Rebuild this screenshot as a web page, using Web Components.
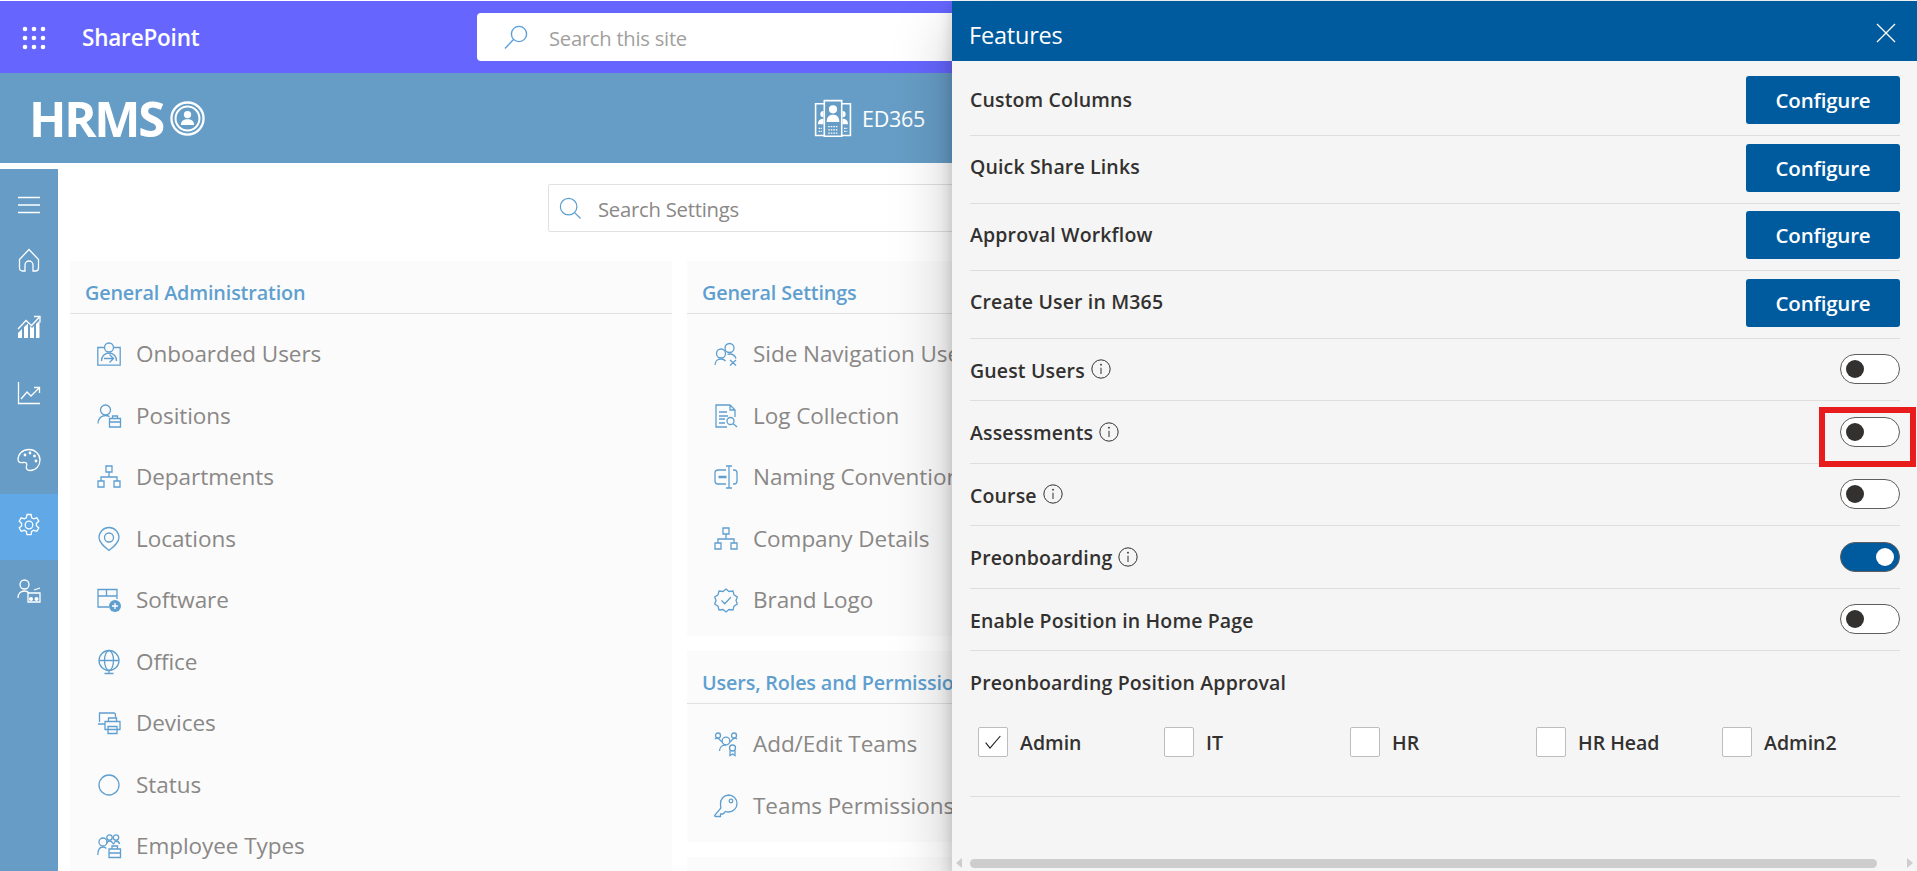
<!DOCTYPE html>
<html lang="en">
<head>
<meta charset="utf-8">
<title>HRMS Settings</title>
<style>
  html, body { margin: 0; height: 100%; overflow: hidden; background: #fff; }
  body { font-family: "Open Sans", "Liberation Sans", sans-serif; }
</style>
</head>
<body>
<hrms-app>
  <top-bar slot="top">SharePoint</top-bar>
  <brand-bar slot="brand"></brand-bar>
  <side-nav slot="nav"></side-nav>
  <settings-main slot="main">
    <settings-card slot="col1" heading="General Administration">
      <settings-item icon="onboard">Onboarded Users</settings-item>
      <settings-item icon="positions">Positions</settings-item>
      <settings-item icon="org">Departments</settings-item>
      <settings-item icon="pin">Locations</settings-item>
      <settings-item icon="software">Software</settings-item>
      <settings-item icon="globe">Office</settings-item>
      <settings-item icon="devices">Devices</settings-item>
      <settings-item icon="status">Status</settings-item>
      <settings-item icon="emptypes">Employee Types</settings-item>
    </settings-card>
    <settings-card slot="col2" heading="General Settings">
      <settings-item icon="sidenav">Side Navigation Users</settings-item>
      <settings-item icon="log">Log Collection</settings-item>
      <settings-item icon="rename">Naming Conventions</settings-item>
      <settings-item icon="org">Company Details</settings-item>
      <settings-item icon="badge">Brand Logo</settings-item>
    </settings-card>
    <settings-card slot="col2" heading="Users, Roles and Permissions">
      <settings-item icon="teams">Add/Edit Teams</settings-item>
      <settings-item icon="key">Teams Permissions</settings-item>
    </settings-card>
    <settings-card slot="col2"></settings-card>
  </settings-main>
  <features-panel slot="panel" heading="Features">
    <config-row>Custom Columns</config-row>
    <config-row>Quick Share Links</config-row>
    <config-row>Approval Workflow</config-row>
    <config-row>Create User in M365</config-row>
    <toggle-row info>Guest Users</toggle-row>
    <toggle-row info highlight>Assessments</toggle-row>
    <toggle-row info>Course</toggle-row>
    <toggle-row info on>Preonboarding</toggle-row>
    <toggle-row>Enable Position in Home Page</toggle-row>
    <approval-group heading="Preonboarding Position Approval">
      <check-item checked>Admin</check-item>
      <check-item>IT</check-item>
      <check-item>HR</check-item>
      <check-item>HR Head</check-item>
      <check-item>Admin2</check-item>
    </approval-group>
  </features-panel>
</hrms-app>

<script>
/**
 * Icon bodies, all drawn on a 24x24 grid.
 */
const ICONS = {
  waffle: [4, 13, 22].map(y => [3, 12, 21].map(x => `<circle cx="${x}" cy="${y}" r="2.3" fill="currentColor" stroke="none"/>`).join('')).join(''),
  sitesearch: '<circle cx="15" cy="9" r="7.6"/><path d="M9.5 14.5L1 23.5"/>',
  search: '<circle cx="10.5" cy="10.5" r="9"/><path d="M17 17l6.5 6.5"/>',
  close: '<path d="M3 3l18 18M21 3L3 21"/>',
  menu: '<path d="M1 4.500h22M1 12h22M1 19.500h22"/>',
  home: '<path d="M2.500 11.500L12 1.500l9.500 10v8.500a3 3 0 0 1-3 3h-2.500v-6a4 4 0 0 0-8 0v6H5.500a3 3 0 0 1-3-3z"/>',
  bars: '<g fill="currentColor" stroke="none"><path d="M1 23v-5l4-4v9zM7 23V12l4-3.500V23zM13 23V11l2 2 2-2v12zM19 23V9l3.500-3.500V23z"/></g><path d="M1 14L9 5.500l5.500 5L22 2.500M17 1.500h6v6"/>',
  line: '<path d="M1.500 1v21.500H23"/><path d="M4 18l6-7 4 4 8-8M17 6.500h5.500V12"/>',
  palette: '<path d="M12 1.500C5.500 1.500 1 6 1 11.500c0 3 3 3.500 5 3 3-.7 4.500 1 3.500 3.500-.8 2.500.5 4.500 3.500 4.500 6 0 10-5 10-10.500S18.500 1.500 12 1.500z"/><g fill="currentColor" stroke="none"><circle cx="8" cy="7" r="1.400"/><circle cx="13" cy="5" r="1.400"/><circle cx="17.500" cy="8" r="1.400"/><circle cx="19" cy="13" r="1.400"/></g>',
  gear: '<circle cx="12" cy="12" r="3.800"/><path d="M10 1.500h4l.7 3.200 2 1.100 3.100-1 2 3.400-2.400 2.200v2.300l2.400 2.200-2 3.400-3.100-1-2 1.100-.7 3.200h-4l-.7-3.200-2-1.100-3.100 1-2-3.400 2.400-2.200v-2.300L2.200 8.200l2-3.400 3.100 1 2-1.100z"/>',
  useradmin: '<circle cx="7.500" cy="5.500" r="4.500"/><path d="M1 19c0-4.500 3-7 6.500-7 2 0 3.500.7 4.500 2"/><path d="M11 14h12v9H11z"/><g fill="currentColor" stroke="none"><circle cx="14" cy="20" r="2"/><circle cx="19.500" cy="20" r="2"/></g><path d="M17 11l6-2"/>',
  ed365: '<g stroke-width="1"><path d="M6.500 3H1v20h5.500M17.500 3H23v20h-5.500"/><path d="M6.500 1h11v22.500h-11z"/></g><circle cx="12" cy="6.500" r="2.600" fill="currentColor" stroke="none"/><path d="M8 14.500c0-3.500 2-4.500 4-4.500s4 1 4 4.500z" fill="currentColor" stroke="none"/><path d="M9 17.500h6M9 19.500h6M9 21.500h6" stroke-width=".8" stroke-dasharray="1 .6"/><g fill="currentColor" stroke="none"><path d="M6 7.500a2 2 0 0 0 0 4zM6 12.500c-2 0-3.500 1-3.500 3.500H6zM18 7.500a2 2 0 0 1 0 4zM18 12.500c2 0 3.500 1 3.500 3.500H18z"/></g><path d="M3 18.500h2M3 20.500h2M19 18.500h2M19 20.500h2" stroke-width=".8" stroke-dasharray="1 .5"/>',
  hrmslogo: '<circle cx="12" cy="12" r="11" stroke-width="1.600"/><circle cx="12" cy="12" r="8.200" stroke-width="1.400"/><circle cx="12" cy="9.300" r="2.500" fill="currentColor" stroke="none"/><path d="M7.500 16.500c0-3 2-4 4.500-4s4.500 1 4.500 4z" fill="currentColor" stroke="none"/>',
  onboard: '<path d="M7 5.500H.8v17.700h22.400V5.500H17"/><circle cx="12" cy="5.500" r="4.500"/><path d="M4.500 19c0-4.500 3-8 7.500-8s7.500 3.500 7.500 8M7 16.500h9M12.500 12.500l4 4-4 4"/>',
  positions: '<circle cx="8.500" cy="6" r="5"/><path d="M1 19.500c0-4.500 3-8 7.500-8 1.500 0 3 .4 4 1.100"/><path d="M12.500 14.500h11v8.500h-11zM15.500 14.500v-2.500h5v2.500M12.500 18h11"/>',
  org: '<path d="M9 1h6v6H9zM1 16h6v6H1zM17 16h6v6h-6zM12 7v5M4 16v-4h16v4"/>',
  pin: '<path d="M12 23.500C7 19.500 2 15.500 2 10.500a10 10 0 0 1 20 0c0 5-5 9-10 13z"/><circle cx="12" cy="10.500" r="4.500"/>',
  software: '<path d="M12 19H1V1.500h19V11M1 8h19M9.500 1.500V8"/><circle cx="18" cy="18" r="6" fill="currentColor" stroke="none"/><path d="M18 15v6M15 18h6" stroke="#fff"/>',
  globe: '<circle cx="12" cy="10.500" r="10"/><ellipse cx="12" cy="10.500" rx="4.500" ry="10"/><path d="M2 10.500h20M12 20.500v3M7.500 23.500h9"/>',
  devices: '<path d="M2.500 11V2h14c1 0 2 1 2 2v2.500M1 13h7"/><path d="M8 10.500h15v8h-15z" stroke-linejoin="round"/><path d="M11.500 10.500V7h8v3.500M11 15.500h9v7h-9z"/>',
  status: '<circle cx="12" cy="12" r="10"/>',
  emptypes: '<circle cx="6" cy="8" r="4"/><circle cx="12.500" cy="3.500" r="2.700"/><circle cx="19" cy="3.500" r="2.700"/><path d="M.8 21c0-5 2-8 5.200-8 1.200 0 2.500.5 3.300 1.500M9.500 9.500c.5-1.500 1.500-2.500 3-2.500s2.800 1 3.500 2.500 2-2.500 3-2.500 3 1 3.700 3M12 15h11.500v8.500H12zM15 15v-3h5.500v3M12 19h11.500"/>',
  sidenav: '<circle cx="15.500" cy="6" r="4.500"/><circle cx="7" cy="11.500" r="4.500"/><path d="M1 23c0-3.500 2.500-6 6-6 2 0 3.500.7 4.500 2M13.500 12.500c.6-.3 1.300-.5 2-.5 3 0 5.500 1.500 6.500 4.500M16 18l6 5.500M22 18l-6 5.500"/>',
  log: '<path d="M13 23H2V1h14l5 5v7M16 1v5h5M5 8h8M5 12h9M5 15h6M5 19h6"/><circle cx="16.500" cy="17" r="3.500"/><path d="M19 19.500l4 3.500"/>',
  rename: '<path d="M12 5H4a3 3 0 0 0-3 3v8a3 3 0 0 0 3 3h8M19 5h1a3 3 0 0 1 3 3v8a3 3 0 0 1-3 3h-1M12 1h6M12 23h6M15 1v22"/><path d="M4.500 12h8" stroke-width="2.500"/>',
  badge: '<path d="M12 1l3 2.500 4-.5 1 3.800 3.300 2.200L22 12.500l1.300 3.500-3.300 2.200-1 3.800-4-.5-3 2.500-3-2.500-4 .5-1-3.800L.7 16 2 12.500.7 9l3.300-2.200L5 3l4 .5z"/><path d="M7.500 12.500l3.300 3.300 6-6.500"/>',
  teams: '<circle cx="12" cy="9" r="3.800"/><circle cx="4" cy="3.500" r="2.500"/><circle cx="20" cy="3.500" r="2.500"/><path d="M1 7c1-1 3-1 4 0l3 3M23 7c-1-1-3-1-4 0l-3 3M5.500 19c0-3.500 2.500-6 6.500-6"/><circle cx="18.500" cy="16" r="3"/><path d="M16 18.500v5l2.500-1.500 2.500 1.500v-5"/>',
  key: '<path d="M14.500 1a8.500 8.500 0 0 1 0 17c-1 0-2-.2-3-.5L9 20H6.500v2.500H1.500c-1 0-1-1-.5-1.500l6-7c-.4-1-.5-2-.5-3.500A8.500 8.500 0 0 1 14.500 1z"/><circle cx="17" cy="7" r="1.800"/>',
  info: '<circle cx="12" cy="12" r="11"/><path d="M12 10.500v7.500"/><circle cx="12" cy="6.800" r="1.100" fill="currentColor" stroke="none"/>',
  check: '<path d="M1 13l6.500 8L23 3"/>'
}

/**
 * Inline icon, takes its colour from the surrounding text.
 */
customElements.define('app-icon',
  class extends HTMLElement {
    constructor () {
      super()
      const size = this.getAttribute('size') || 24
      const w = this.getAttribute('weight') || 1.3
      this.attachShadow({ mode: 'open' }).innerHTML = `
        <style>
          :host { display: inline-flex; flex: none; width: ${size}px; height: ${size}px; }
          svg { width: 100%; height: 100%; display: block; overflow: visible; }
        </style>
        <svg viewBox="0 0 24 24" fill="none" stroke="currentColor" stroke-width="${w}">${ICONS[this.getAttribute('name')] || ''}</svg>`
    }
  }
)

const appTemplate = document.createElement('template')
appTemplate.innerHTML = `
  <style>
    :host { display: flex; flex-direction: column; height: 871px; padding-top: 1px; box-sizing: border-box; position: relative; overflow: hidden; }
    #body { display: flex; flex: 1; min-height: 0; margin-top: 6px; }
  </style>
  <slot name="top"></slot>
  <slot name="brand"></slot>
  <div id="body">
    <slot name="nav"></slot>
    <slot name="main"></slot>
  </div>
  <slot name="panel"></slot>
`
customElements.define('hrms-app',
  class extends HTMLElement {
    constructor () {
      super()
      this.attachShadow({ mode: 'open' }).appendChild(appTemplate.content.cloneNode(true))
    }
  }
)

const topBarTemplate = document.createElement('template')
topBarTemplate.innerHTML = `
  <style>
    :host { display: flex; align-items: center; height: 72px; flex: none; background: #6666ff; color: #fff; }
    app-icon { margin-left: 22px; }
    #name { margin-left: 36px; width: 395px; font-size: 22.500px; font-weight: 600; letter-spacing: -.2px; }
    #box { display: flex; align-items: center; width: 640px; height: 48px; background: #fff; border-radius: 4px; color: #5a9fdc; }
    #box app-icon { margin-left: 27px; }
    #box span { margin-left: 21px; margin-top: 2px; font-size: 20.200px; color: #a19f9d; letter-spacing: -.25px; }
  </style>
  <app-icon name="waffle" size="24"></app-icon>
  <div id="name"><slot></slot></div>
  <div id="box"><app-icon name="sitesearch" size="24" weight="1.400"></app-icon><span>Search this site</span></div>
`
customElements.define('top-bar',
  class extends HTMLElement {
    constructor () {
      super()
      this.attachShadow({ mode: 'open' }).appendChild(topBarTemplate.content.cloneNode(true))
    }
  }
)

const brandTemplate = document.createElement('template')
brandTemplate.innerHTML = `
  <style>
    :host { display: flex; align-items: center; height: 90px; flex: none; background: #669dc6; color: #fff; }
    #logo { display: flex; align-items: center; margin-left: 29px; width: 785px; }
    #logo b { font-size: 49px; font-weight: 700; letter-spacing: -2.300px; line-height: 1; }
    #logo app-icon { margin-left: 7px; margin-top: 1px; }
    #site { display: flex; align-items: center; gap: 10px; font-size: 21.500px; letter-spacing: -.3px; }
  </style>
  <div id="logo"><b>HRMS</b><app-icon name="hrmslogo" size="35"></app-icon></div>
  <div id="site"><app-icon name="ed365" size="38" weight=".8"></app-icon><span>ED365</span></div>
`
customElements.define('brand-bar',
  class extends HTMLElement {
    constructor () {
      super()
      this.attachShadow({ mode: 'open' }).appendChild(brandTemplate.content.cloneNode(true))
    }
  }
)

const navTemplate = document.createElement('template')
navTemplate.innerHTML = `
  <style>
    :host { display: flex; flex-direction: column; width: 58px; flex: none; background: #669cc6; color: #fff; }
    div { display: flex; align-items: center; justify-content: center; height: 66px; box-sizing: border-box; }
    div.on { background: #60a8e6; }
    #menu { height: 60.500px; padding-top: 12px; }
    #last { height: 60px; padding-top: 2px; }
  </style>
  <div id="menu"><app-icon name="menu" size="24"></app-icon></div>
  <div style="padding-bottom:6px"><app-icon name="home" size="24"></app-icon></div>
  <div style="padding-bottom:3px"><app-icon name="bars" size="24"></app-icon></div>
  <div style="padding-bottom:3px"><app-icon name="line" size="24"></app-icon></div>
  <div style="padding-bottom:2px"><app-icon name="palette" size="24"></app-icon></div>
  <div class="on" style="padding-bottom:3px"><app-icon name="gear" size="24"></app-icon></div>
  <div id="last"><app-icon name="useradmin" size="24"></app-icon></div>
`
customElements.define('side-nav',
  class extends HTMLElement {
    constructor () {
      super()
      this.attachShadow({ mode: 'open' }).appendChild(navTemplate.content.cloneNode(true))
    }
  }
)

const mainTemplate = document.createElement('template')
mainTemplate.innerHTML = `
  <style>
    :host { display: block; flex: 1; min-width: 0; padding-left: 12px; overflow: hidden; }
    #search { display: flex; align-items: center; width: 880px; height: 48px; box-sizing: border-box; margin: 15px 0 29px 478px; border: 1px solid #e1e1e1; border-radius: 2px; background: #fff; color: #5a9fd0; }
    #search app-icon { margin-left: 10px; }
    #search span { margin-left: 17px; margin-top: 2px; font-size: 20.300px; color: #8a8886; letter-spacing: -.25px; }
    #cols { display: grid; grid-template-columns: 602px 602px; gap: 15px; }
    .col { display: flex; flex-direction: column; gap: 15px; }
  </style>
  <div id="search"><app-icon name="search" size="22" weight="1.300"></app-icon><span>Search Settings</span></div>
  <div id="cols">
    <div class="col"><slot name="col1"></slot></div>
    <div class="col"><slot name="col2"></slot></div>
  </div>
`
customElements.define('settings-main',
  class extends HTMLElement {
    constructor () {
      super()
      this.attachShadow({ mode: 'open' }).appendChild(mainTemplate.content.cloneNode(true))
    }
  }
)

const cardTemplate = document.createElement('template')
cardTemplate.innerHTML = `
  <style>
    :host { display: block; background: #fbfbfb; }
    h2 { display: flex; align-items: center; height: 42px; margin: 0; padding: 10px 15px 0; border-bottom: 1px solid #e1e1e1; font-size: 19.800px; font-weight: 600; color: #5f9fcf; white-space: nowrap; letter-spacing: -.15px; }
    #list { padding: 9.500px 0 5px; }
  </style>
  <h2></h2>
  <div id="list"><slot></slot></div>
`
customElements.define('settings-card',
  class extends HTMLElement {
    constructor () {
      super()
      this.attachShadow({ mode: 'open' }).appendChild(cardTemplate.content.cloneNode(true))
      this.shadowRoot.querySelector('h2').textContent = this.getAttribute('heading') || ''
    }
  }
)

const itemTemplate = document.createElement('template')
itemTemplate.innerHTML = `
  <style>
    :host { display: flex; align-items: center; height: 61.500px; padding-left: 27px; color: #5f9fcf; }
    span { margin-left: 15px; margin-top: -1.500px; font-size: 22.500px; color: #8a8886; white-space: nowrap; letter-spacing: -.05px; }
  </style>
  <app-icon size="24"></app-icon>
  <span><slot></slot></span>
`
customElements.define('settings-item',
  class extends HTMLElement {
    constructor () {
      super()
      const root = this.attachShadow({ mode: 'open' })
      const content = itemTemplate.content.cloneNode(true)
      content.querySelector('app-icon').setAttribute('name', this.getAttribute('icon'))
      root.appendChild(content)
    }
  }
)

const panelTemplate = document.createElement('template')
panelTemplate.innerHTML = `
  <style>
    :host { position: absolute; top: 1px; right: 0; bottom: 0; width: 965px; display: flex; flex-direction: column; background: #f5f5f5; box-shadow: 0 25.600px 57.600px 0 rgba(0,0,0,.22), 0 4.800px 14.400px 0 rgba(0,0,0,.18); }
    header { display: flex; align-items: center; justify-content: space-between; height: 60px; flex: none; padding: 0 19px 0 17px; box-sizing: border-box; background: #005a9e; color: #fff; }
    header span { font-size: 23.500px; letter-spacing: -.2px; margin-top: 8px; }
    header app-icon { margin-top: 3px; }
    #body { flex: 1; min-height: 0; padding: 7.500px 17px 0 18px; }
    #scroll { display: flex; align-items: center; height: 16px; flex: none; padding: 0 4px; gap: 6px; }
    #scroll i { flex: none; width: 0; height: 0; border-style: solid; border-color: transparent; }
    #scroll i:first-child { border-width: 5px 6px 5px 0; border-right-color: #cdcdcd; }
    #scroll i:last-child { border-width: 5px 0 5px 6px; border-left-color: #cdcdcd; }
    #thumb { width: 907px; height: 9px; margin-left: 2px; border-radius: 5px; background: #cdcdcd; }
    #spring { flex: 1; }
  </style>
  <header><span></span><app-icon name="close" size="24" weight="1.300"></app-icon></header>
  <div id="body"><slot></slot></div>
  <div id="scroll"><i></i><div id="thumb"></div><div id="spring"></div><i></i></div>
`
customElements.define('features-panel',
  class extends HTMLElement {
    constructor () {
      super()
      this.attachShadow({ mode: 'open' }).appendChild(panelTemplate.content.cloneNode(true))
      this.shadowRoot.querySelector('header span').textContent = this.getAttribute('heading')
    }
  }
)

const configTemplate = document.createElement('template')
configTemplate.innerHTML = `
  <style>
    :host { display: flex; align-items: center; justify-content: space-between; padding: 7.500px 0 11px; border-bottom: 1px solid #dedede; font-size: 19.500px; font-weight: 600; color: #323130; letter-spacing: .15px; }
    span { margin-top: -2px; }
    button { width: 154px; height: 48px; border: 0; border-radius: 3px; background: #005a9e; color: #fff; font: 600 20.500px "Open Sans", "Liberation Sans", sans-serif; letter-spacing: -.2px; padding: 0; }
  </style>
  <span><slot></slot></span>
  <button>Configure</button>
`
customElements.define('config-row',
  class extends HTMLElement {
    constructor () {
      super()
      this.attachShadow({ mode: 'open' }).appendChild(configTemplate.content.cloneNode(true))
    }
  }
)

const toggleTemplate = document.createElement('template')
toggleTemplate.innerHTML = `
  <style>
    :host { display: flex; align-items: center; padding: 15.500px 0 16px; border-bottom: 1px solid #dedede; font-size: 19.500px; font-weight: 600; color: #323130; letter-spacing: .15px; }
    #label { display: flex; align-items: center; gap: 6px; flex: 1; height: 30px; }
    #text { margin-top: 2px; }
    #track { position: relative; width: 60px; height: 30px; box-sizing: border-box; border: 1px solid #605e5c; border-radius: 15px; background: #fff; }
    #knob { position: absolute; left: 5px; top: 5px; width: 18px; height: 18px; border-radius: 50%; background: #323130; }
    :host([on]) #track { background: #005a9e; }
    :host([on]) #knob { left: auto; right: 5px; background: #fff; }
    #mark { display: none; position: absolute; left: -22px; right: -17px; top: -11px; bottom: -21px; border: 6px solid #e81c1c; }
    :host([highlight]) #mark { display: block; }
    app-icon { display: none; }
    :host([info]) app-icon { display: inline-flex; }
  </style>
  <div id="label"><span id="text"><slot></slot></span><app-icon name="info" size="20" weight="1.200"></app-icon></div>
  <div id="track"><div id="knob"></div><div id="mark"></div></div>
`
customElements.define('toggle-row',
  class extends HTMLElement {
    constructor () {
      super()
      this.attachShadow({ mode: 'open' }).appendChild(toggleTemplate.content.cloneNode(true))
    }
  }
)

const groupTemplate = document.createElement('template')
groupTemplate.innerHTML = `
  <style>
    :host { display: block; height: 146px; box-sizing: border-box; padding-top: 20px; border-bottom: 1px solid #dedede; }
    h3 { margin: 0; font-size: 19.500px; font-weight: 600; line-height: 24px; color: #323130; letter-spacing: .15px; }
    #boxes { display: grid; grid-template-columns: repeat(5, 186px); margin: 32px 0 0 8px; }
  </style>
  <h3></h3>
  <div id="boxes"><slot></slot></div>
`
customElements.define('approval-group',
  class extends HTMLElement {
    constructor () {
      super()
      this.attachShadow({ mode: 'open' }).appendChild(groupTemplate.content.cloneNode(true))
      this.shadowRoot.querySelector('h3').textContent = this.getAttribute('heading')
    }
  }
)

const checkTemplate = document.createElement('template')
checkTemplate.innerHTML = `
  <style>
    :host { display: flex; align-items: center; gap: 12px; font-size: 19.500px; font-weight: 600; color: #323130; letter-spacing: 0; }
    #box { display: flex; align-items: center; justify-content: center; width: 30px; height: 30px; box-sizing: border-box; border: 1px solid #bdbdbd; border-radius: 2px; background: #fff; color: #201f1e; }
    app-icon { display: none; }
    :host([checked]) app-icon { display: inline-flex; }
  </style>
  <div id="box"><app-icon name="check" size="16" weight="1.700"></app-icon></div>
  <span><slot></slot></span>
`
customElements.define('check-item',
  class extends HTMLElement {
    constructor () {
      super()
      this.attachShadow({ mode: 'open' }).appendChild(checkTemplate.content.cloneNode(true))
    }
  }
)
</script>
</body>
</html>
